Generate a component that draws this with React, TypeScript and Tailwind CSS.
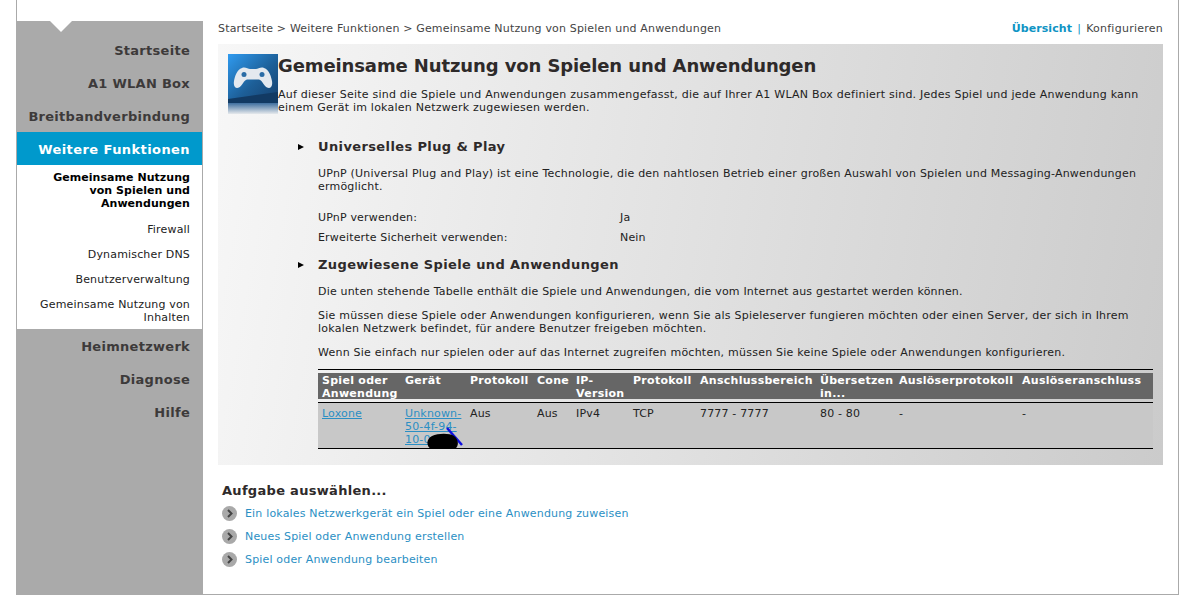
import React from "react";

const font = { fontFamily: '"DejaVu Sans", Verdana, sans-serif' };

const topNav = ["Startseite", "A1 WLAN Box", "Breitbandverbindung"];
const subNav = ["Firewall", "Dynamischer DNS", "Benutzerverwaltung"];
const bottomNav = ["Heimnetzwerk", "Diagnose", "Hilfe"];
const tasks = [
  "Ein lokales Netzwerkgerät ein Spiel oder eine Anwendung zuweisen",
  "Neues Spiel oder Anwendung erstellen",
  "Spiel oder Anwendung bearbeiten",
];

const cols = [
  { w: "w-[83px]", head: "Spiel oder Anwendung", val: "Loxone", link: true },
  { w: "w-[65px]", head: "Gerät", val: "Unknown-50-4f-94-10-0", link: true },
  { w: "w-[67px]", head: "Protokoll", val: "Aus" },
  { w: "w-[39px]", head: "Cone", val: "Aus" },
  { w: "w-[57px]", head: "IP-Version", val: "IPv4" },
  { w: "w-[67px]", head: "Protokoll", val: "TCP" },
  { w: "w-[120px]", head: "Anschlussbereich", val: "7777 - 7777" },
  { w: "w-[79px]", head: "Übersetzen in...", val: "80 - 80" },
  { w: "w-[123px]", head: "Auslöserprotokoll", val: "-" },
  { w: "w-[135px]", head: "Auslöseranschluss", val: "-" },
];

function NavItem({ label, lower }: { label: string; lower?: boolean }) {
  return (
    <div
      className={`h-[33px] pr-[13px] text-right text-[13px] font-bold tracking-[0.28px] text-[#3d3a3a] ${
        lower ? "leading-[33px]" : "leading-[35px]"
      }`}
    >
      {label}
    </div>
  );
}

function GameIcon() {
  return (
    <svg width="50" height="60" viewBox="0 0 50 60" className="shrink-0">
      <defs>
        <linearGradient id="tile" x1="0" y1="0" x2="1" y2="1">
          <stop offset="0" stopColor="#2f9bf0" />
          <stop offset="0.55" stopColor="#1d5f98" />
          <stop offset="1" stopColor="#163f6c" />
        </linearGradient>
        <linearGradient id="fade" x1="0" y1="0" x2="0" y2="1">
          <stop offset="0" stopColor="#3f6f9f" />
          <stop offset="1" stopColor="#e6e9ec" />
        </linearGradient>
      </defs>
      <rect width="50" height="49" fill="url(#tile)" />
      <path d="M0 49 L0 45 L50 38 L50 49 Z" fill="#123a63" />
      <rect y="49" width="50" height="11" fill="url(#fade)" />
      <path
        d="M14 14 C17 12.5 20 15 22 15 L28 15 C30 15 33 12.5 36 14 C41 15.5 43 22 44 27 C45 33 42 35 39 33.5 C36 32 34 26 31 25.5 L19 25.5 C16 26 14 32 11 33.5 C8 35 5 33 6 27 C7 22 9 15.5 14 14 Z"
        fill="#e4e9ef"
      />
      <circle cx="16" cy="20.5" r="2.5" fill="#2a6ca6" />
      <circle cx="34" cy="20.5" r="2.5" fill="#2a6ca6" />
    </svg>
  );
}

function SectionTitle({ children }: { children: React.ReactNode }) {
  return (
    <div className="flex items-center">
      <span className="ml-[80px] mr-[14px] h-0 w-0 border-y-[3px] border-l-[6px] border-y-transparent border-l-black" />
      <h3 className="text-[13px] font-bold leading-[16px] tracking-[0.38px] text-[#2e2a2a]">{children}</h3>
    </div>
  );
}

export default function App() {
  return (
    <div style={font} className="h-[602px] w-[1200px] overflow-hidden bg-white text-[11px] tracking-[0.17px] text-[#222]">
      <div className="ml-4 flex h-[595px] w-[1163px] border-x border-b border-[#aaaaaa]">
        {/* sidebar */}
        <aside className="flex w-[186px] shrink-0 flex-col pt-[21px]">
          <div className="relative bg-[#aaaaaa] pt-[12px]">
            <span className="absolute left-[33px] top-0 h-0 w-0 border-x-[11px] border-t-[11px] border-x-transparent border-t-white" />
            {topNav.map((n) => (
              <NavItem key={n} label={n} />
            ))}
          </div>
          <div className="h-[33px] border-r border-[#aaaaaa] bg-[#0099cc] pr-[12px] text-right text-[13px] font-bold leading-[35px] tracking-[0.42px] text-white">
            Weitere Funktionen
          </div>
          <div className="flex h-[164px] flex-col border-r border-[#aaaaaa] bg-white pr-[12px] pt-[6px] text-right leading-[13px]">
            <div className="font-bold tracking-[0.05px] text-black">
              Gemeinsame Nutzung
              <br />
              von Spielen und
              <br />
              Anwendungen
            </div>
            <div className="mt-[13px]">{subNav[0]}</div>
            {subNav.slice(1).map((s) => (
              <div key={s} className="mt-[12px]">
                {s}
              </div>
            ))}
            <div className="mt-[12px]">
              Gemeinsame Nutzung von
              <br />
              Inhalten
            </div>
          </div>
          <div className="flex-1 bg-[#aaaaaa] pt-[1px]">
            {bottomNav.map((n) => (
              <NavItem key={n} label={n} lower />
            ))}
          </div>
        </aside>

        {/* main */}
        <main className="ml-[15px] w-[945px] shrink-0">
          <div className="flex h-[44px] items-end justify-between pb-[9px] leading-[13px] text-[#444]">
            <span>Startseite &gt; Weitere Funktionen &gt; Gemeinsame Nutzung von Spielen und Anwendungen</span>
            <span className="tracking-[0.25px]">
              <b className="tracking-[0.1px] text-[#0f94c4]">Übersicht</b>
              <span className="mx-[5px] text-[#0f94c4]">|</span>
              Konfigurieren
            </span>
          </div>

          <section className="h-[421px] bg-[linear-gradient(100deg,#f7f7f7,#cbcbcb)] pt-[10px]">
            <div className="flex pl-[10px]">
              <GameIcon />
              <div>
                <h1 className="mt-[1px] text-[18px] font-bold leading-[22px] tracking-[-0.11px] text-[#2e2a2a]">
                  Gemeinsame Nutzung von Spielen und Anwendungen
                </h1>
                <p className="mt-[11px] w-[870px] leading-[13px] tracking-[0.23px]">
                  Auf dieser Seite sind die Spiele und Anwendungen zusammengefasst, die auf Ihrer A1 WLAN Box definiert sind. Jedes Spiel und jede Anwendung kann einem Gerät im lokalen Netzwerk zugewiesen werden.
                </p>
              </div>
            </div>

            <div className="mt-[25px]">
              <SectionTitle>Universelles Plug &amp; Play</SectionTitle>
              <p className="ml-[100px] mt-[12px] w-[830px] leading-[13px] tracking-[0.2px]">
                UPnP (Universal Plug and Play) ist eine Technologie, die den nahtlosen Betrieb einer großen Auswahl von Spielen und Messaging-Anwendungen ermöglicht.
              </p>
              <div className="ml-[100px] mt-[18px] flex leading-[13px]">
                <span className="w-[302px]">UPnP verwenden:</span>
                <span>Ja</span>
              </div>
              <div className="ml-[100px] mt-[7px] flex leading-[13px]">
                <span className="w-[302px]">Erweiterte Sicherheit verwenden:</span>
                <span>Nein</span>
              </div>
            </div>

            <div className="mt-[13px]">
              <SectionTitle>Zugewiesene Spiele und Anwendungen</SectionTitle>
              <div className="ml-[100px] w-[830px] leading-[13px]">
                <p className="mt-[12px] tracking-[0.19px]">
                  Die unten stehende Tabelle enthält die Spiele und Anwendungen, die vom Internet aus gestartet werden können.
                </p>
                <p className="mt-[11px] tracking-[0.24px]">
                  Sie müssen diese Spiele oder Anwendungen konfigurieren, wenn Sie als Spieleserver fungieren möchten oder einen Server, der sich in Ihrem lokalen Netzwerk befindet, für andere Benutzer freigeben möchten.
                </p>
                <p className="mt-[11px] tracking-[0.235px]">
                  Wenn Sie einfach nur spielen oder auf das Internet zugreifen möchten, müssen Sie keine Spiele oder Anwendungen konfigurieren.
                </p>
              </div>
            </div>

            {/* table */}
            <div className="ml-[100px] mt-[10px] w-[835px] border-y border-black pt-[3px]">
              <div className="flex h-[26px] bg-[#666666] font-bold leading-[13px] text-white">
                {cols.map((c, i) => (
                  <div key={i} className={`${c.w} shrink-0 pl-[4px] pt-[1px] tracking-[0.28px]`}>
                    {c.head}
                  </div>
                ))}
              </div>
              <div className="relative mt-[3px] flex h-[46px] border-t border-black bg-[#c8c8c8] pt-[4px] leading-[13px]">
                {cols.map((c, i) => (
                  <div key={i} className={`${c.w} shrink-0 break-words pl-[4px]`}>
                    {c.link ? <span className="text-[#2b8fc4] underline">{c.val}</span> : c.val}
                  </div>
                ))}
                {/* scribble over the MAC address */}
                <svg width="50" height="26" viewBox="0 0 50 26" className="absolute left-[100px] top-[20px]">
                  <path d="M29 5 L44 22" stroke="#1010e0" strokeWidth="2.5" fill="none" />
                  <path d="M14 13 C20 10 32 10 36 13 C41 17 41 23 37 26 L13 26 C8 23 8 16 14 13 Z" fill="#000" />
                </svg>
              </div>
            </div>
          </section>

          <div className="pl-[4px] pt-[18px]">
            <h2 className="text-[13px] font-bold leading-[16px] tracking-[0.3px] text-[#2e2a2a]">Aufgabe auswählen...</h2>
            <ul className="mt-[7px] space-y-[8px] leading-[15px] text-[#2b8fc4]">
              {tasks.map((t) => (
                <li key={t} className="flex items-center">
                  <svg width="15" height="15" viewBox="0 0 15 15" className="mr-[8px] shrink-0">
                    <circle cx="7.5" cy="7.5" r="7.5" fill="#a9a9a9" />
                    <path d="M6 4 L9.5 7.5 L6 11" stroke="#444" strokeWidth="2" fill="none" />
                  </svg>
                  {t}
                </li>
              ))}
            </ul>
          </div>
        </main>
      </div>
    </div>
  );
}
